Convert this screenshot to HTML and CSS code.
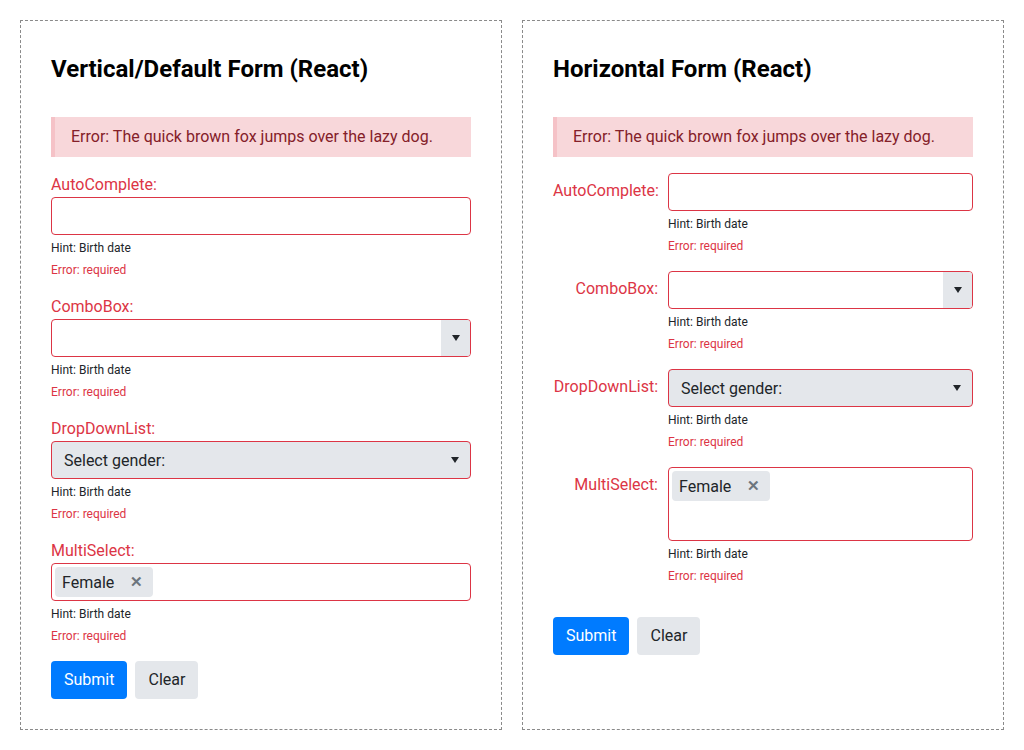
FILE: index.html
```html
<!DOCTYPE html>
<html>
<head>
<meta charset="utf-8">
<link rel="stylesheet" href="styles.css">
</head>
<body>
<div class="page">
  <section class="panel">
    <h2 class="title">Vertical/Default Form (React)</h2>
    <div class="alert">Error: The quick brown fox jumps over the lazy dog.</div>
    <div class="field">
      <div class="label">AutoComplete:</div>
      <div class="control"><div class="input"></div>
        <div class="hint">Hint: Birth date</div><div class="err">Error: required</div></div>
    </div>
    <div class="field">
      <div class="label">ComboBox:</div>
      <div class="control"><div class="input combo"><span class="grow"></span><span class="btn-arrow"><span class="tri"></span></span></div>
        <div class="hint">Hint: Birth date</div><div class="err">Error: required</div></div>
    </div>
    <div class="field">
      <div class="label">DropDownList:</div>
      <div class="control"><div class="input ddl"><span class="grow">Select gender:</span><span class="tri"></span></div>
        <div class="hint">Hint: Birth date</div><div class="err">Error: required</div></div>
    </div>
    <div class="field">
      <div class="label">MultiSelect:</div>
      <div class="control"><div class="input multi"><span class="chip">Female<span class="x">✕</span></span></div>
        <div class="hint">Hint: Birth date</div><div class="err">Error: required</div></div>
    </div>
    <div class="actions">
      <button class="btn primary">Submit</button>
      <button class="btn">Clear</button>
    </div>
  </section>

  <section class="panel horizontal">
    <h2 class="title">Horizontal Form (React)</h2>
    <div class="alert">Error: The quick brown fox jumps over the lazy dog.</div>
    <div class="field">
      <div class="label">AutoComplete:</div>
      <div class="control"><div class="input"></div>
        <div class="hint">Hint: Birth date</div><div class="err">Error: required</div></div>
    </div>
    <div class="field">
      <div class="label">ComboBox:</div>
      <div class="control"><div class="input combo"><span class="grow"></span><span class="btn-arrow"><span class="tri"></span></span></div>
        <div class="hint">Hint: Birth date</div><div class="err">Error: required</div></div>
    </div>
    <div class="field">
      <div class="label">DropDownList:</div>
      <div class="control"><div class="input ddl"><span class="grow">Select gender:</span><span class="tri"></span></div>
        <div class="hint">Hint: Birth date</div><div class="err">Error: required</div></div>
    </div>
    <div class="field">
      <div class="label">MultiSelect:</div>
      <div class="control"><div class="input multi tall"><span class="chip">Female<span class="x">✕</span></span></div>
        <div class="hint">Hint: Birth date</div><div class="err">Error: required</div></div>
    </div>
    <div class="actions">
      <button class="btn primary">Submit</button>
      <button class="btn">Clear</button>
    </div>
  </section>
</div>
</body>
</html>
```
FILE: styles.css
```css
* { box-sizing: border-box; }
html, body { margin: 0; padding: 0; background: #fff; }
body {
  font-family: Roboto, "Liberation Sans", sans-serif;
  font-size: 16px;
  color: #212529;
}
.page {
  display: flex;
  gap: 20px;
  padding: 20px;
  align-items: stretch;
}
.panel {
  width: 482px;
  height: 710px;
  border: 1px dashed #8a8a8a;
  padding: 30px;
}
.title {
  margin: 4px 0 33px;
  font-size: 24px;
  font-weight: 700;
  line-height: 29px;
  color: #000;
}
.alert {
  background: #f8d7da;
  border-left: 4px solid #f5c2c7;
  color: #842029;
  padding: 8px 16px;
  line-height: 24px;
  margin-bottom: 16px;
}
.field { margin-bottom: 16px; }
.label {
  color: #dc3545;
  line-height: 24px;
}
.input {
  height: 38px;
  border: 1px solid #dc3545;
  border-radius: 4px;
  background: #fff;
  display: flex;
  align-items: center;
  overflow: hidden;
}
.grow { flex: 1; }
.combo .btn-arrow {
  width: 29px;
  align-self: stretch;
  background: #e4e7eb;
  display: flex;
  align-items: center;
  justify-content: center;
}
.tri {
  width: 0; height: 0;
  border-left: 4.5px solid transparent;
  border-right: 4.5px solid transparent;
  border-top: 6px solid #212529;
}
.ddl {
  background: #e4e7eb;
  padding: 0 11px 0 12px;
  color: #212529;
}
.multi {
  align-items: flex-start;
  padding: 3px;
}
.multi.tall { height: 74px; }
.chip {
  display: inline-flex;
  align-items: center;
  height: 30px;
  padding: 0 10px 0 7px;
  background: #e4e7eb;
  border-radius: 4px;
  color: #212529;
}
.chip .x {
  margin-left: 16px;
  font-size: 15px;
  color: #6c757d;
  font-weight: 700;
}
.hint, .err {
  font-size: 12px;
  line-height: 18px;
  margin-top: 4px;
}
.hint { color: #212529; }
.err { color: #dc3545; }
.actions {
  display: flex;
  gap: 8px;
}
.btn {
  font-family: Roboto, "Liberation Sans", sans-serif;
  font-size: 16px;
  line-height: 24px;
  height: 38px;
  padding: 6px 13px;
  border: none;
  border-radius: 4px;
  background: #e4e7eb;
  color: #212529;
}
.btn.primary { background: #007bff; color: #fff; }

.horizontal .field {
  display: grid;
  grid-template-columns: 105px 1fr;
  column-gap: 10px;
}
.horizontal .label {
  text-align: right;
  padding-top: 6px;
}
.horizontal .actions { margin-top: 32px; }
```
